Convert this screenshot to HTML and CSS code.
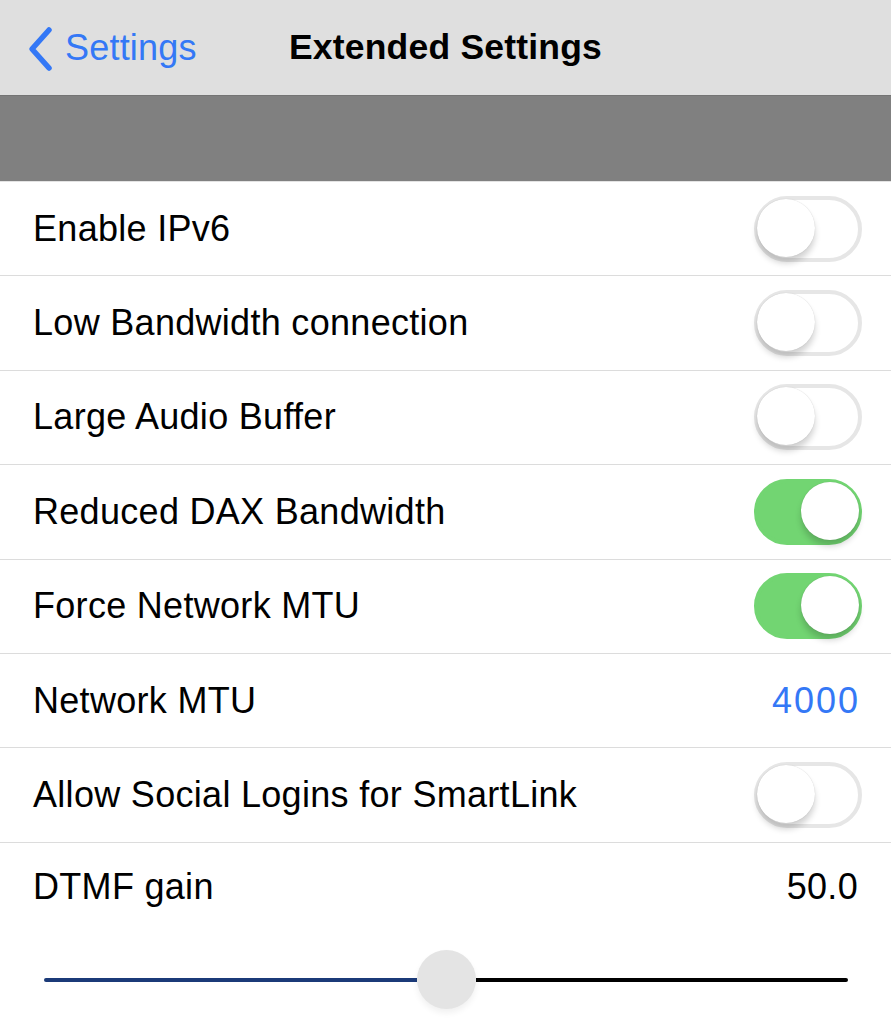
FILE: index.html
```html
<!DOCTYPE html>
<html>
<head>
<meta charset="utf-8">
<link rel="stylesheet" href="styles.css">
</head>
<body>
<div class="nav">
  <div class="back">
    <svg class="chev" width="28" height="46" viewBox="0 0 28 46"><path d="M23 4 L6 23 L23 42" fill="none" stroke="#3478f6" stroke-width="5.5" stroke-linecap="round" stroke-linejoin="round"/></svg>
    <span class="back-label">Settings</span>
  </div>
  <div class="title">Extended Settings</div>
</div>
<div class="band"></div>
<div class="list">
  <div class="row"><span class="label">Enable IPv6</span><span class="toggle"><span class="knob"></span></span></div>
  <div class="row"><span class="label">Low Bandwidth connection</span><span class="toggle"><span class="knob"></span></span></div>
  <div class="row"><span class="label">Large Audio Buffer</span><span class="toggle"><span class="knob"></span></span></div>
  <div class="row"><span class="label">Reduced DAX Bandwidth</span><span class="toggle on"><span class="knob"></span></span></div>
  <div class="row"><span class="label">Force Network MTU</span><span class="toggle on"><span class="knob"></span></span></div>
  <div class="row"><span class="label">Network MTU</span><span class="value blue">4000</span></div>
  <div class="row"><span class="label">Allow Social Logins for SmartLink</span><span class="toggle"><span class="knob"></span></span></div>
  <div class="row last"><span class="label">DTMF gain</span><span class="value">50.0</span></div>
  <div class="slider">
    <div class="track-min"></div>
    <div class="thumb"></div>
    <div class="track-max"></div>
  </div>
</div>
</body>
</html>
```
FILE: styles.css
```css
* { box-sizing: border-box; }
html, body { margin: 0; padding: 0; background: #fff; }
body {
  width: 891px;
  height: 1024px;
  overflow: hidden;
  font-family: "Liberation Sans", Arial, sans-serif;
  color: #000;
}
.nav {
  height: 95px;
  background: #dfdfdf;
  position: relative;
  display: flex;
  align-items: center;
}
.back {
  display: flex;
  align-items: center;
  padding-left: 26px;
  gap: 11px;
  height: 100%;
}
.chev { display: block; margin-top: 2px; }
.back-label {
  color: #3478f6;
  font-size: 36px;
  letter-spacing: 0.2px;
}
.title {
  position: absolute;
  left: 0; right: 0; top: 0; bottom: 0;
  display: flex;
  align-items: center;
  justify-content: center;
  font-weight: bold;
  font-size: 35.5px;
  letter-spacing: 0.2px;
  pointer-events: none;
}
.band {
  height: 87px;
  background: #808080;
  border-top: 1px solid #747474;
  border-bottom: 1px solid #e3e3e3;
}
.row {
  height: 94.4px;
  border-bottom: 1px solid #dcdcdc;
  display: flex;
  align-items: center;
  justify-content: space-between;
  padding: 0 33px 0 33px;
}
.row.last { border-bottom: none; height: 90px; padding-bottom: 2px; }
.label {
  font-size: 36px;
  letter-spacing: 0.3px;
}
.value { font-size: 36px; letter-spacing: 0.3px; }
.value.blue { color: #3478f6; letter-spacing: 2px; margin-right: -2px; }
.toggle {
  width: 108px;
  height: 66px;
  border-radius: 33px;
  border: 4px solid #e6e6e6;
  background: #fff;
  position: relative;
  margin-right: -4px;
}
.knob {
  position: absolute;
  top: -1px;
  left: -1px;
  width: 58px;
  height: 58px;
  border-radius: 50%;
  background: #fff;
  box-shadow: 0 6px 6px rgba(0,0,0,0.18), 0 0 1px rgba(0,0,0,0.2);
}
.toggle.on {
  background: #72d572;
  border-color: #72d572;
}
.toggle.on .knob {
  left: auto;
  right: -1px;
}
.slider {
  display: flex;
  align-items: center;
  padding: 4px 43px 0 44px;
  height: 90px;
}
.track-min {
  flex: 0 0 373px;
  height: 4px;
  background: #1b3a78;
  border-radius: 2px 0 0 2px;
}
.thumb {
  flex: 0 0 59px;
  height: 59px;
  border-radius: 50%;
  background: #e4e4e4;
  box-shadow: 0 4px 6px rgba(0,0,0,0.06);
}
.track-max {
  flex: 1;
  height: 4px;
  background: #000;
  border-radius: 0 2px 2px 0;
}
```
